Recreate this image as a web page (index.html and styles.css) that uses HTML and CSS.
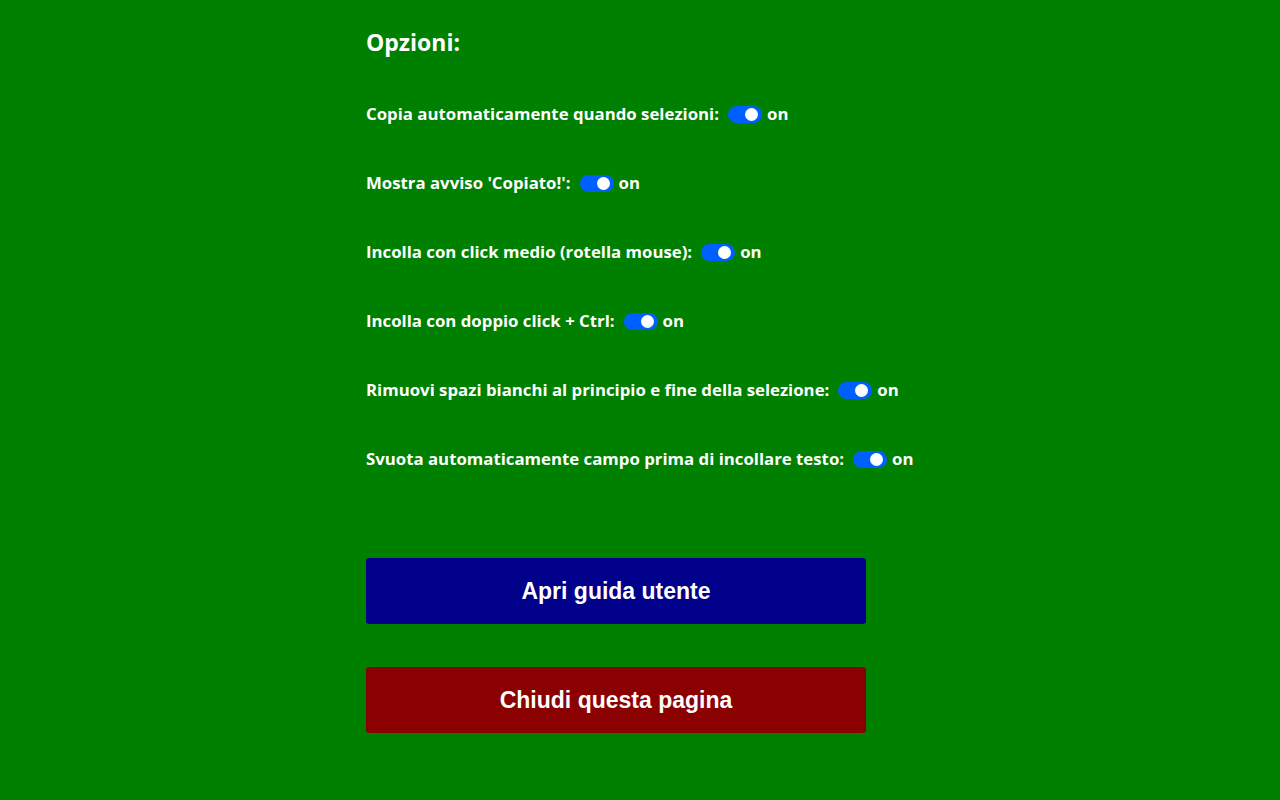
FILE: index.html
```html
<!DOCTYPE html>
<html lang="it">
<head>
<meta charset="utf-8">
<title>Opzioni</title>
<link rel="stylesheet" href="styles.css">
</head>
<body>
<main class="page">
  <h1 class="title">Opzioni:</h1>
  <div class="options">
    <div class="option"><span class="label">Copia automaticamente quando selezioni:</span><span class="toggle"><span class="knob"></span></span><span class="state">on</span></div>
    <div class="option"><span class="label">Mostra avviso 'Copiato!':</span><span class="toggle"><span class="knob"></span></span><span class="state">on</span></div>
    <div class="option"><span class="label">Incolla con click medio (rotella mouse):</span><span class="toggle"><span class="knob"></span></span><span class="state">on</span></div>
    <div class="option"><span class="label">Incolla con doppio click + Ctrl:</span><span class="toggle"><span class="knob"></span></span><span class="state">on</span></div>
    <div class="option"><span class="label">Rimuovi spazi bianchi al principio e fine della selezione:</span><span class="toggle"><span class="knob"></span></span><span class="state">on</span></div>
    <div class="option"><span class="label">Svuota automaticamente campo prima di incollare testo:</span><span class="toggle"><span class="knob"></span></span><span class="state">on</span></div>
  </div>
  <div class="buttons">
    <button class="btn btn-guide">Apri guida utente</button>
    <button class="btn btn-close">Chiudi questa pagina</button>
  </div>
</main>
</body>
</html>
```
FILE: styles.css
```css
html, body {
  margin: 0;
  padding: 0;
  background: #008000;
}
body {
  font-family: "Open Sans", "Noto Sans", sans-serif;
  color: #ffffff;
}
.page {
  width: 548px;
  margin: 0 auto;
  padding-top: 26px;
}
.title {
  margin: 0;
  font-size: 23px;
  font-weight: 700;
  line-height: 32px;
}
.options {
  display: flex;
  flex-direction: column;
  gap: 45px;
  margin-top: 43px;
}
.option {
  display: flex;
  align-items: center;
  height: 24px;
  font-size: 16.8px;
  font-weight: 700;
  white-space: nowrap;
}
.label,
.state {
  flex-shrink: 0;
}
.toggle {
  flex-shrink: 0;
  position: relative;
  width: 34px;
  height: 17px;
  border-radius: 9px;
  background: #0060ff;
  margin-left: 9px;
  margin-right: 5px;
  margin-top: 2px;
}
.knob {
  position: absolute;
  right: 4px;
  top: 2px;
  width: 13px;
  height: 13px;
  border-radius: 50%;
  background: #ffffff;
}
.buttons {
  display: flex;
  flex-direction: column;
  gap: 43px;
  margin-top: 88px;
}
.btn {
  width: 500px;
  height: 66px;
  border: none;
  border-radius: 3px;
  color: #ffffff;
  font-family: "Liberation Sans", Arial, sans-serif;
  font-size: 23px;
  font-weight: 700;
  padding: 0;
}
.btn-guide { background: #00008b; }
.btn-close { background: #8b0000; }
```
